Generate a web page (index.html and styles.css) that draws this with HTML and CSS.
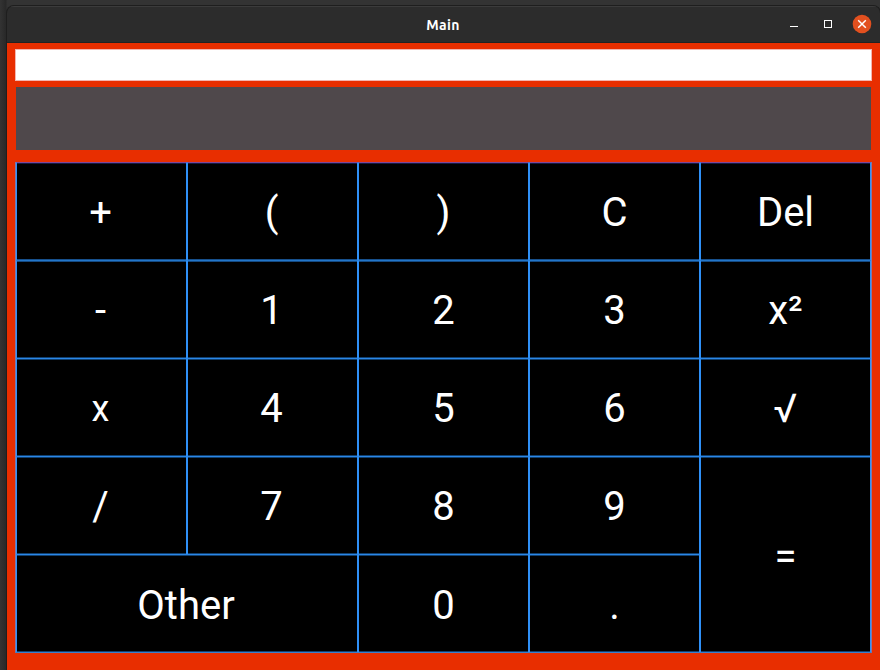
FILE: index.html
```html
<!DOCTYPE html>
<html lang="en">
<head>
<meta charset="utf-8">
<title>Main</title>
<link rel="stylesheet" href="styles.css">
</head>
<body>
<div class="window">
  <header class="titlebar">
    <h1 class="title">Main</h1>
    <div class="controls">
      <svg class="min" width="8" height="8" viewBox="0 0 8 8"><path d="M0 6.5h8" stroke="#fff"/></svg>
      <svg class="max" width="8" height="8" viewBox="0 0 8 8"><rect x=".5" y=".5" width="7" height="7" fill="none" stroke="#fff"/></svg>
      <svg class="close" width="20" height="20" viewBox="0 0 20 20"><circle cx="10" cy="10" r="9.3" fill="#e2501f"/><path d="M6.2 6.2l7.6 7.6M13.8 6.2l-7.6 7.6" stroke="#fff" stroke-width="1.5"/></svg>
    </div>
  </header>
  <main class="app">
    <div class="entry"></div>
    <div class="result"></div>
    <div class="keys">
      <div class="key top left">+</div><div class="key top left">(</div><div class="key top">)</div><div class="key top">C</div><div class="key top">Del</div>
      <div class="key soft left">-</div><div class="key soft left">1</div><div class="key soft">2</div><div class="key soft">3</div><div class="key soft">x²</div>
      <div class="key left small">x</div><div class="key left">4</div><div class="key">5</div><div class="key">6</div><div class="key">√</div>
      <div class="key left">/</div><div class="key left">7</div><div class="key">8</div><div class="key">9</div><div class="key last equals">=</div>
      <div class="key last left other">Other</div><div class="key last">0</div><div class="key last">.</div>
    </div>
  </main>
</div>
</body>
</html>
```
FILE: styles.css
```css
* { box-sizing: border-box; }
body {
  margin: 0;
  width: 880px;
  height: 670px;
  overflow: hidden;
  padding: 5px 0 0 6px;
  background: linear-gradient(90deg, #333 0, #282828 6px, #333 7px);
}
.window {
  width: 875px;
  height: 665px;
  border: 1px solid #1e1e1e;
  border-bottom: 0;
  border-radius: 8px 8px 0 0;
  background: #2c2c2c;
  overflow: hidden;
}
.titlebar {
  height: 37px;
  display: grid;
  grid-template-columns: 1fr auto 1fr;
  align-items: center;
  border-top: 1px solid #3b3b3b;
  border-bottom: 1px solid #222;
}
.title {
  grid-column: 2;
  margin: 0 1px 0 0;
  font: bold 14px/20px "Ubuntu", "Noto Sans", sans-serif;
  letter-spacing: .3px;
  color: #fff;
}
.controls {
  display: flex;
  justify-content: flex-end;
  align-items: center;
  padding: 0 8px 2px 0;
}
.min { margin-right: 26px; }
.max { margin-right: 20px; }
.app {
  height: 628px;
  padding: 6px 8px 0;
  background: #e82e00;
}
.entry {
  width: 857px;
  height: 32px;
  background: #fff;
  border: 1px solid #f3b6b0;
}
.result {
  width: 855px;
  height: 63px;
  margin: 6px 0 0 1px;
  background: #4f484b;
}
.keys {
  margin-top: 12px;
  width: 857px;
  height: 491px;
  display: grid;
  grid-template-columns: repeat(5, 171px);
  grid-template-rows: repeat(5, 98px);
  border: solid #8278a8;
  border-width: 0 1px 1px;
  border-bottom-color: #3b80cc;
}
/* Each divider is a bright line with a faint row above and below it. */
.key {
  display: flex;
  align-items: center;
  justify-content: center;
  padding-top: 3px;
  background: #000;
  border: solid #2f90f7;
  border-width: 1px 1px 0;
  border-top-color: #2b86e6;
  box-shadow: inset 0 1px #10406f, inset 0 -1px #10406f;
  color: #fff;
  font: 40px/48px Roboto, sans-serif;
}
.soft {
  border-top-color: #2376c9;
  box-shadow: inset 0 1px #154a82, inset 0 -1px #10406f;
}
.top {
  border-top-color: #7d4799;
  box-shadow: inset 0 1px #141a44, inset 0 -1px #17508c;
}
.left { padding-right: 2px; }
.last { padding-top: 5px; }
.equals { grid-row: span 2; }
.other { grid-column: span 2; }
.small { font-size: 36px; }
```
